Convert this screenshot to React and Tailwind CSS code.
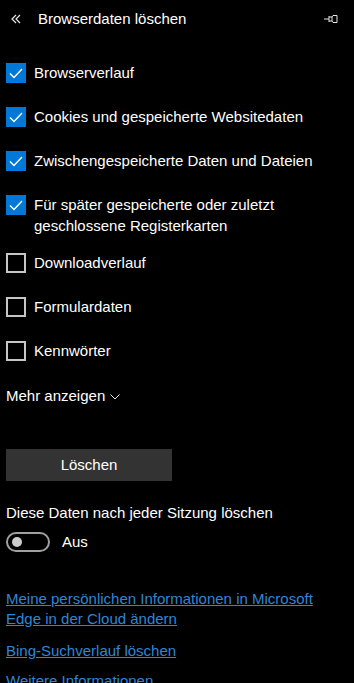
import React, { useState } from "react";

const font = { fontFamily: '"Liberation Sans", Arial, sans-serif' };

const items = [
  { label: "Browserverlauf", checked: true },
  { label: "Cookies und gespeicherte Websitedaten", checked: true },
  { label: "Zwischengespeicherte Daten und Dateien", checked: true },
  { label: "Für später gespeicherte oder zuletzt geschlossene Registerkarten", checked: true, tall: true },
  { label: "Downloadverlauf", checked: false },
  { label: "Formulardaten", checked: false },
  { label: "Kennwörter", checked: false },
];

const Check = ({ checked }) =>
  checked ? (
    <div className="w-5 h-5 shrink-0 bg-[#0078d7] flex items-center justify-center">
      <svg width="14" height="11" viewBox="0 0 14 11" fill="none">
        <path d="M1 5.5 L5 9.5 L13 1" stroke="white" strokeWidth="1.4" />
      </svg>
    </div>
  ) : (
    <div className="w-5 h-5 shrink-0 border-2 border-[#c6c6c6]" />
  );

export default function App() {
  const [state, setState] = useState(items.map((i) => i.checked));

  return (
    <div className="w-[354px] h-[683px] bg-black text-white overflow-hidden text-[15px]" style={font}>
      {/* Kopfzeile */}
      <div className="h-[38px] flex items-center pl-[11px] pr-[16px]">
        <svg width="10" height="10" viewBox="0 0 10 10" fill="none" className="shrink-0">
          <path d="M5 1 L1 5 L5 9 M9 1 L5 5 L9 9" stroke="#e6e6e6" strokeWidth="1.2" />
        </svg>
        <span className="ml-[17px] leading-5">Browserdaten löschen</span>
        <svg width="14" height="10" viewBox="0 0 14 10" fill="none" className="ml-auto shrink-0">
          <path d="M0 5 H5 M5 2 V8 M5 3 H8 M5 7 H8 M8 3 L9 1.5 H13 V8.5 H9 L8 7 M8 3 V7" stroke="#e6e6e6" strokeWidth="1" />
        </svg>
      </div>

      <div className="pt-[25px] px-[6px]">
        {items.map((item, i) => (
          <div
            key={item.label}
            className={`flex items-start gap-[8px] cursor-pointer ${item.tall ? "h-[58px]" : "h-[44px]"}`}
            onClick={() => setState(state.map((v, j) => (j === i ? !v : v)))}
          >
            <Check checked={state[i]} />
            <span className="leading-[21px] -mt-[1px] pr-6">{item.label}</span>
          </div>
        ))}

        <div className="flex items-center leading-5 h-5 mt-[1px]">
          <span>Mehr anzeigen</span>
          <svg width="10" height="6" viewBox="0 0 10 6" fill="none" className="ml-[5px] mt-[2px]">
            <path d="M0.5 0.5 L5 5 L9.5 0.5" stroke="#e6e6e6" strokeWidth="1" />
          </svg>
        </div>

        <button className="mt-[43px] w-[166px] h-[32px] bg-[#333333] text-white text-[15px]">
          Löschen
        </button>

        <div className="mt-[22px] leading-5">Diese Daten nach jeder Sitzung löschen</div>
        <div className="mt-[9px] flex items-center">
          <div className="w-[44px] h-[20px] rounded-full border-2 border-[#a0a0a0] flex items-center pl-[4px]">
            <div className="w-[10px] h-[10px] rounded-full bg-[#cccccc]" />
          </div>
          <span className="ml-[12px] leading-5">Aus</span>
        </div>

        <div className="mt-[37px] flex flex-col text-[#2f86d6]">
          <a href="#" className="underline leading-[20px] pr-8">
            Meine persönlichen Informationen in Microsoft Edge in der Cloud ändern
          </a>
          <a href="#" className="underline leading-5 mt-[12px]">Bing-Suchverlauf löschen</a>
          <a href="#" className="underline leading-5 mt-[10px]">Weitere Informationen</a>
        </div>
      </div>
    </div>
  );
}
